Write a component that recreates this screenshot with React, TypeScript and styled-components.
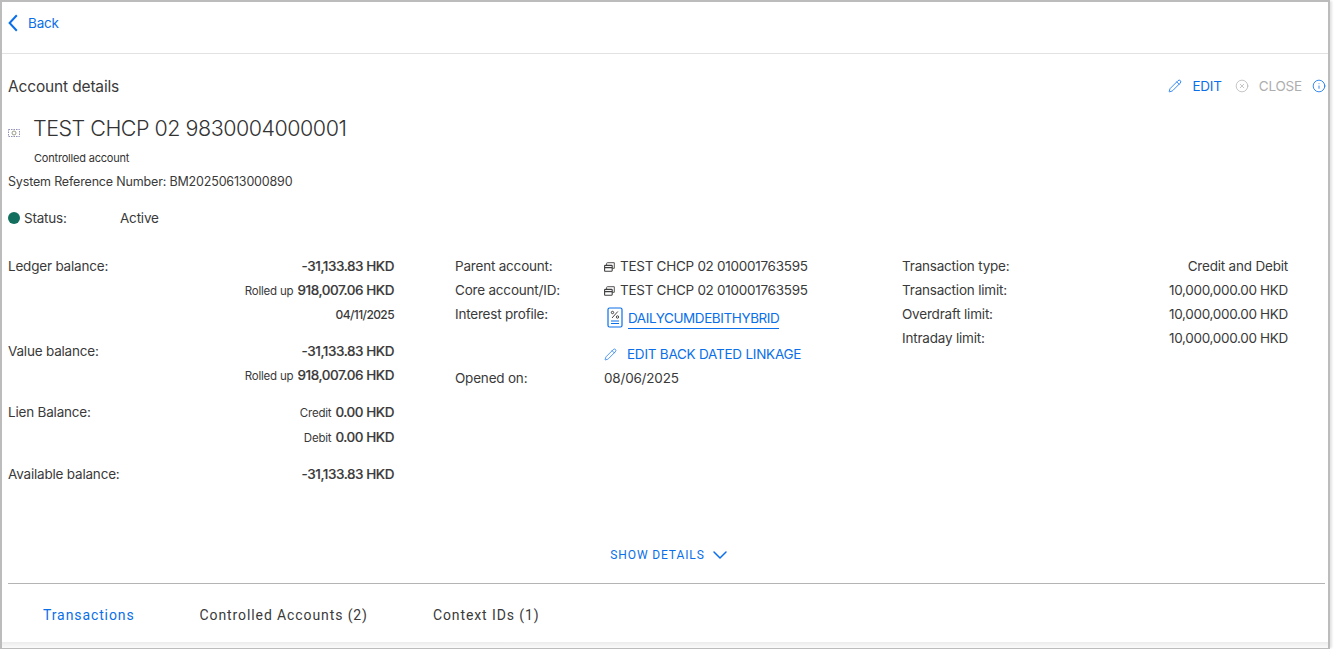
import React from 'react';
import styled, {createGlobalStyle} from 'styled-components';
import {ChevronDown, CircleX, Info, Pencil} from 'lucide-react';

const BLUE = '#0a6fe8';
const TEXT = '#3a3a3a';

const GlobalStyle = createGlobalStyle`
  html, body {
    margin: 0;
    padding: 0;
    background: #fff;
    overflow: hidden;
  }
  body {
    font-family: Inter, "Liberation Sans", sans-serif;
    color: ${TEXT};
  }
`;

const Frame = styled.div`
  box-sizing: border-box;
  width: 1330px;
  height: 649px;
  border-top: 2px solid #bcbcbc;
  border-left: 2px solid #bcbcbc;
  border-right: 2px solid #bcbcbc;
  border-bottom: 1px solid #bcbcbc;
  box-shadow: 3px 0 2px -1px #e4e4e4;
  display: flex;
  flex-direction: column;
`;

const TopBar = styled.div`
  box-sizing: border-box;
  height: 52px;
  flex: none;
  border-bottom: 1px solid #e2e2e2;
  padding: 0 0 10px 6px;
  display: flex;
  align-items: center;
  gap: 10px;
  color: ${BLUE};
  font-size: 13.5px;
  letter-spacing: -0.2px;
`;

const Content = styled.div`
  padding: 0 1px 0 6px;
  flex: 1;
`;

const HeadingRow = styled.div`
  height: 24px;
  margin-top: 20px;
  display: flex;
  align-items: center;
  justify-content: space-between;
`;

const Heading = styled.h1`
  margin: 0;
  font-size: 15.5px;
  font-weight: 400;
  letter-spacing: -0.16px;
`;

const Actions = styled.div`
  display: flex;
  align-items: center;
  font-size: 13.5px;
  letter-spacing: -0.2px;
`;

const Action = styled.span<{$muted?: boolean}>`
  display: flex;
  align-items: center;
  gap: 10px;
  margin-right: ${p => (p.$muted ? 10 : 13)}px;
  color: ${p => (p.$muted ? '#aeaeae' : BLUE)};
`;

const InfoIcon = styled(Info)`
  margin-right: 1px;
`;

const TitleRow = styled.div`
  display: flex;
  align-items: center;
  height: 28px;
  margin-top: 16px;
`;

const AccountIcon = styled.svg`
  width: 12px;
  height: 8px;
  margin: 9px 14px 0 0;
  flex: none;
`;

const Title = styled.div`
  font-size: 21.5px;
  font-weight: 300;
  letter-spacing: -0.5px;
  margin-left: -1px;
  color: #333;
`;

const SubTitle = styled.div`
  margin: 8px 0 0 26px;
  height: 16px;
  line-height: 16px;
  font-size: 11px;
  letter-spacing: -0.2px;
  color: #333;
`;

const Reference = styled.div`
  margin-top: 8px;
  height: 16px;
  line-height: 16px;
  font-size: 12.5px;
  letter-spacing: -0.17px;
`;

const StatusRow = styled.div`
  display: flex;
  align-items: center;
  height: 20px;
  margin-top: 18px;
  font-size: 13.5px;
  letter-spacing: -0.2px;
`;

const StatusDot = styled.span`
  width: 12px;
  height: 12px;
  border-radius: 50%;
  background: #136f5d;
  margin-right: 4px;
`;

const StatusLabel = styled.span`
  width: 96px;
`;

const Columns = styled.div`
  display: grid;
  grid-template-columns: 386px 386px 386px;
  column-gap: 61px;
  margin-top: 26px;
  height: 291px;
  font-size: 13.5px;
  letter-spacing: -0.2px;
`;

const Group = styled.div`
  margin-bottom: 13px;
`;

const Row = styled.div`
  display: flex;
  justify-content: space-between;
  align-items: center;
  height: 24px;
`;

const LienRow = styled(Row)`
  margin-top: 1px;
`;

const Amount = styled.span`
  font-weight: 500;
  letter-spacing: -0.45px;
  -webkit-text-stroke: 0.15px #3a3a3a;
`;

const Small = styled.span`
  font-size: 11.5px;
  font-weight: 400;
  margin-right: 4px;
  letter-spacing: -0.2px;
`;

const DateText = styled.span`
  font-size: 12px;
  font-weight: 500;
  letter-spacing: -0.6px;
`;

const Limit = styled.span`
  letter-spacing: -0.32px;
`;

const MiddleRow = styled.div<{$h?: number}>`
  display: grid;
  grid-template-columns: 149px 1fr;
  align-items: start;
  line-height: 24px;
  height: ${p => p.$h ?? 24}px;
`;

const Value = styled.span`
  display: flex;
  align-items: center;
  gap: 5px;
  height: 24px;
  letter-spacing: -0.28px;
`;

const SmallAccount = styled.svg`
  width: 11px;
  height: 10px;
  margin-top: 2px;
  flex: none;
`;

const ProfileCell = styled.div`
  display: flex;
  align-items: center;
  height: 30px;
  margin-left: 3px;
  gap: 5px;
`;

const ProfileLink = styled.span`
  color: ${BLUE};
  border-bottom: 1px solid ${BLUE};
  line-height: 19px;
  margin-top: 4px;
  letter-spacing: -0.42px;
`;

const BackDated = styled.div`
  display: flex;
  align-items: center;
  gap: 10px;
  height: 24px;
  color: ${BLUE};
  letter-spacing: -0.24px;
`;

const ShowDetails = styled.div`
  display: flex;
  justify-content: center;
  align-items: center;
  gap: 3px;
  height: 20px;
  margin-left: 7px;
  color: ${BLUE};
  font-family: Roboto, sans-serif;
  font-size: 12px;
  letter-spacing: 0.88px;
`;

const Divider = styled.hr`
  margin: 18px 2px 0 0;
  border: 0;
  border-top: 1px solid #b4b4b4;
`;

const Tabs = styled.div`
  display: flex;
  gap: 65px;
  height: 24px;
  margin-top: 19px;
  padding-left: 35px;
  align-items: center;
  font-family: Roboto, sans-serif;
  font-size: 14px;
  letter-spacing: 0.9px;
`;

const Tab = styled.span<{$active?: boolean}>`
  color: ${p => (p.$active ? BLUE : TEXT)};
`;

const FootShadow = styled.div`
  height: 6px;
  flex: none;
  background: linear-gradient(#ececec, #fafafa);
`;

const BackChevron = () => (
  <svg width="10" height="18" viewBox="0 0 10 18" fill="none">
    <path d="M8.8 1.2 1.6 9l7.2 7.8" stroke={BLUE} strokeWidth="2" />
  </svg>
);

const AccountGlyph = () => (
  <AccountIcon viewBox="0 0 12 8" fill="none">
    <rect x="0.5" y="0.5" width="11" height="7" stroke="#8f8fb8" strokeWidth="1" strokeDasharray="1.5 1" />
    <circle cx="6" cy="4" r="2" stroke="#9a9a8a" strokeWidth="1" />
  </AccountIcon>
);

const LinkedGlyph = () => (
  <SmallAccount viewBox="0 0 11 10" fill="none">
    <path d="M2.6 3V1.5q0-.8.8-.8h6.9v5.6H8.4" stroke="#555" strokeWidth="1" />
    <rect x=".6" y="3.4" width="7.6" height="5.8" rx=".6" stroke="#3f3f3f" strokeWidth="1.1" />
    <path d="M.6 5.6h7.6" stroke="#3f3f3f" strokeWidth="1.3" />
  </SmallAccount>
);

const PercentDoc = () => (
  <svg width="16" height="21" viewBox="0 0 16 21" fill="none">
    <rect x="1" y="1" width="14" height="19" rx="1.5" stroke={BLUE} strokeWidth="1.2" />
    <circle cx="5.5" cy="5.5" r="1.2" stroke="#333" strokeWidth="0.9" />
    <circle cx="10.5" cy="10" r="1.2" stroke="#333" strokeWidth="0.9" />
    <path d="M10.8 4.5 5 11" stroke="#333" strokeWidth="0.9" />
    <path d="M4 14h8M4 16.5h8" stroke={BLUE} strokeWidth="1" />
  </svg>
);

const App = () => {
  return (
    <>
      <GlobalStyle />
      <Frame>
        <TopBar>
          <BackChevron />
          <span>Back</span>
        </TopBar>
        <Content>
          <HeadingRow>
            <Heading>Account details</Heading>
            <Actions>
              <Action>
                <Pencil size={14} strokeWidth={1.4} />
                EDIT
              </Action>
              <Action $muted>
                <CircleX size={14} strokeWidth={1.2} />
                CLOSE
              </Action>
              <InfoIcon size={14} strokeWidth={1.4} color={BLUE} />
            </Actions>
          </HeadingRow>
          <TitleRow>
            <AccountGlyph />
            <Title>TEST CHCP 02 9830004000001</Title>
          </TitleRow>
          <SubTitle>Controlled account</SubTitle>
          <Reference>System Reference Number: BM20250613000890</Reference>
          <StatusRow>
            <StatusDot />
            <StatusLabel>Status:</StatusLabel>
            <span>Active</span>
          </StatusRow>
          <Columns>
            <div>
              <Group>
                <Row>
                  <span>Ledger balance:</span>
                  <Amount>-31,133.83 HKD</Amount>
                </Row>
                <Row>
                  <span />
                  <span>
                    <Small>Rolled up</Small>
                    <Amount>918,007.06 HKD</Amount>
                  </span>
                </Row>
                <Row>
                  <span />
                  <DateText>04/11/2025</DateText>
                </Row>
              </Group>
              <Group>
                <Row>
                  <span>Value balance:</span>
                  <Amount>-31,133.83 HKD</Amount>
                </Row>
                <Row>
                  <span />
                  <span>
                    <Small>Rolled up</Small>
                    <Amount>918,007.06 HKD</Amount>
                  </span>
                </Row>
              </Group>
              <Group>
                <Row>
                  <span>Lien Balance:</span>
                  <span>
                    <Small>Credit</Small>
                    <Amount>0.00 HKD</Amount>
                  </span>
                </Row>
                <LienRow>
                  <span />
                  <span>
                    <Small>Debit</Small>
                    <Amount>0.00 HKD</Amount>
                  </span>
                </LienRow>
              </Group>
              <Row>
                <span>Available balance:</span>
                <Amount>-31,133.83 HKD</Amount>
              </Row>
            </div>
            <div>
              <MiddleRow>
                <span>Parent account:</span>
                <Value>
                  <LinkedGlyph />
                  TEST CHCP 02 010001763595
                </Value>
              </MiddleRow>
              <MiddleRow>
                <span>Core account/ID:</span>
                <Value>
                  <LinkedGlyph />
                  TEST CHCP 02 010001763595
                </Value>
              </MiddleRow>
              <MiddleRow $h={40}>
                <span>Interest profile:</span>
                <ProfileCell>
                  <PercentDoc />
                  <ProfileLink>DAILYCUMDEBITHYBRID</ProfileLink>
                </ProfileCell>
              </MiddleRow>
              <MiddleRow>
                <span />
                <BackDated>
                  <Pencil size={13} strokeWidth={1.3} />
                  EDIT BACK DATED LINKAGE
                </BackDated>
              </MiddleRow>
              <MiddleRow>
                <span>Opened on:</span>
                <span>08/06/2025</span>
              </MiddleRow>
            </div>
            <div>
              <Row>
                <span>Transaction type:</span>
                <span>Credit and Debit</span>
              </Row>
              <Row>
                <span>Transaction limit:</span>
                <Limit>10,000,000.00 HKD</Limit>
              </Row>
              <Row>
                <span>Overdraft limit:</span>
                <Limit>10,000,000.00 HKD</Limit>
              </Row>
              <Row>
                <span>Intraday limit:</span>
                <Limit>10,000,000.00 HKD</Limit>
              </Row>
            </div>
          </Columns>
          <ShowDetails>
            SHOW DETAILS
            <ChevronDown size={24} strokeWidth={1.5} />
          </ShowDetails>
          <Divider />
          <Tabs>
            <Tab $active>Transactions</Tab>
            <Tab>Controlled Accounts (2)</Tab>
            <Tab>Context IDs (1)</Tab>
          </Tabs>
        </Content>
        <FootShadow />
      </Frame>
    </>
  );
};

export default App;
